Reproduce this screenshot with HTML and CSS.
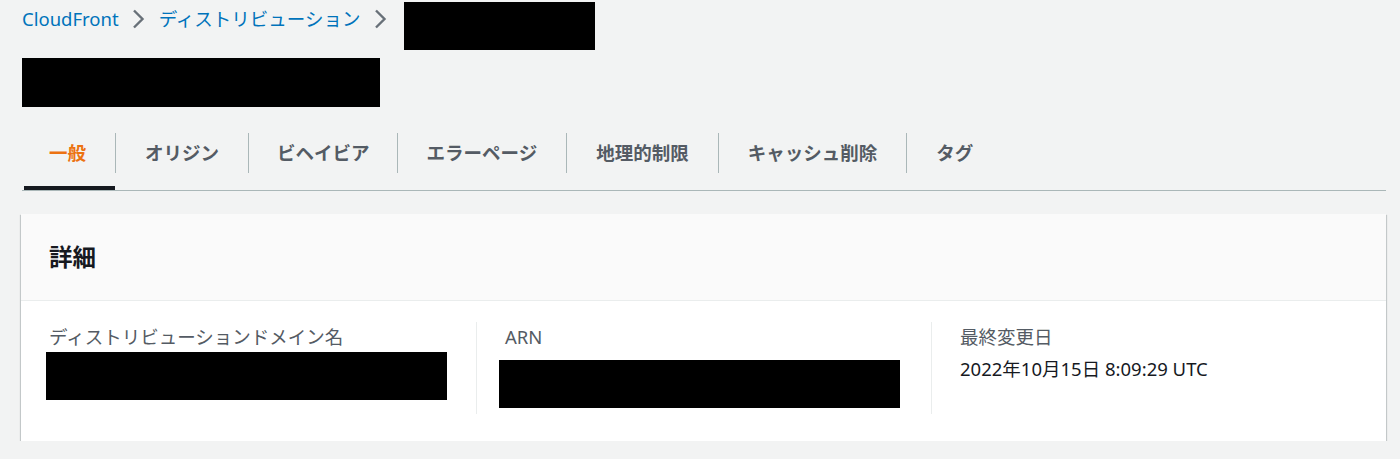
FILE: index.html
```html
<!DOCTYPE html>
<html lang="ja">
	<head>
		<meta charset="UTF-8" />
		<title>CloudFront | ディストリビューション</title>
		<link rel="stylesheet" href="styles.css">
	</head>
	<body>
		<div class="page">
			<nav class="breadcrumb">
				<a href="#" class="crumb">CloudFront</a>
				<svg class="chevron" width="13" height="20" viewBox="0 0 13 20">
					<path d="M2 1.5 L10.5 10 L2 18.5" fill="none" stroke="#687078" stroke-width="2.4" />
				</svg>
				<a href="#" class="crumb">ディストリビューション</a>
				<svg class="chevron" width="13" height="20" viewBox="0 0 13 20">
					<path d="M2 1.5 L10.5 10 L2 18.5" fill="none" stroke="#687078" stroke-width="2.4" />
				</svg>
				<div class="redact redact-crumb"></div>
			</nav>

			<div class="redact redact-title"></div>

			<ul class="tabs">
				<li class="tab active"><span>一般</span></li>
				<li class="tab"><span>オリジン</span></li>
				<li class="tab"><span>ビヘイビア</span></li>
				<li class="tab"><span>エラーページ</span></li>
				<li class="tab"><span>地理的制限</span></li>
				<li class="tab"><span>キャッシュ削除</span></li>
				<li class="tab"><span>タグ</span></li>
			</ul>

			<div class="card">
				<div class="card-header">
					<h2>詳細</h2>
				</div>
				<div class="card-body">
					<div class="col">
						<div class="label">ディストリビューションドメイン名</div>
						<div class="redact redact-domain"></div>
					</div>
					<div class="col">
						<div class="label">ARN</div>
						<div class="redact redact-arn"></div>
					</div>
					<div class="col">
						<div class="label">最終変更日</div>
						<div class="value">2022年10月15日 8:09:29 UTC</div>
					</div>
				</div>
			</div>
		</div>
	</body>
</html>
```

FILE: styles.css
```css
body {
	margin: 0;
	background: #f2f3f3;
	font-family: "Noto Sans", "Noto Sans CJK JP", sans-serif;
	font-size: 18.5px;
	color: #16191f;
}
.page {
	padding-left: 21px;
	width: 1365px;
}
.breadcrumb {
	display: flex;
	align-items: flex-start;
	padding-top: 2px;
	height: 48px;
}
.crumb {
	color: #0073bb;
	text-decoration: none;
	line-height: 28px;
	margin-top: 3px;
	padding-left: 1px;
}
.chevron {
	margin: 7px 13px 0 13px;
}
.redact {
	background: #000;
}
.redact-crumb {
	width: 191px;
	height: 48px;
	margin-left: 4px;
}
.redact-title {
	width: 358px;
	height: 49px;
	margin-top: 8px;
	margin-left: 1px;
}
.tabs {
	list-style: none;
	display: flex;
	margin: 13px 0 0 1px;
	padding: 0 0 0 2px;
	border-bottom: 1px solid #aab7b8;
}
.tab {
	padding: 13px 0 13px;
	border-bottom: 4px solid transparent;
	font-weight: bold;
	color: #545b64;
}
.tab span {
	display: block;
	line-height: 40px;
	padding: 0 29px;
	border-left: 1px solid #aab7b8;
}
.tab:first-child span {
	border-left: none;
	padding-left: 25px;
}
.tab:nth-child(3) span {
	padding: 0 27px 0 28px;
}
.tab.active {
	border-bottom-color: #16191f;
	color: #ec7211;
}
.card {
	margin-top: 23px;
	background: #fff;
	box-shadow: 0 1px 1px 0 rgba(0, 28, 36, 0.3), 1px 1px 1px 0 rgba(0, 28, 36, 0.15),
		-1px 1px 1px 0 rgba(0, 28, 36, 0.15);
}
.card-header {
	background: #fafafa;
	border-bottom: 1px solid #eaeded;
	padding: 28px 28px;
}
.card-header h2 {
	margin: 0;
	font-size: 23.5px;
	line-height: 30px;
	font-weight: bold;
}
.card-body {
	display: grid;
	grid-template-columns: 1fr 1fr 1fr;
	padding: 21px 0 27px;
}
.col {
	padding: 0 28px 6px;
	border-left: 1px solid #eaeded;
}
.col:first-child {
	border-left: none;
}
.label {
	color: #545b64;
	line-height: 26px;
	padding-top: 2px;
}
.value {
	margin-top: 6px;
	line-height: 26px;
}
.redact-domain {
	width: 401px;
	height: 48px;
	margin: 2px 0 0 -3px;
}
.redact-arn {
	width: 401px;
	height: 48px;
	margin: 10px 0 0 -6px;
}
```
